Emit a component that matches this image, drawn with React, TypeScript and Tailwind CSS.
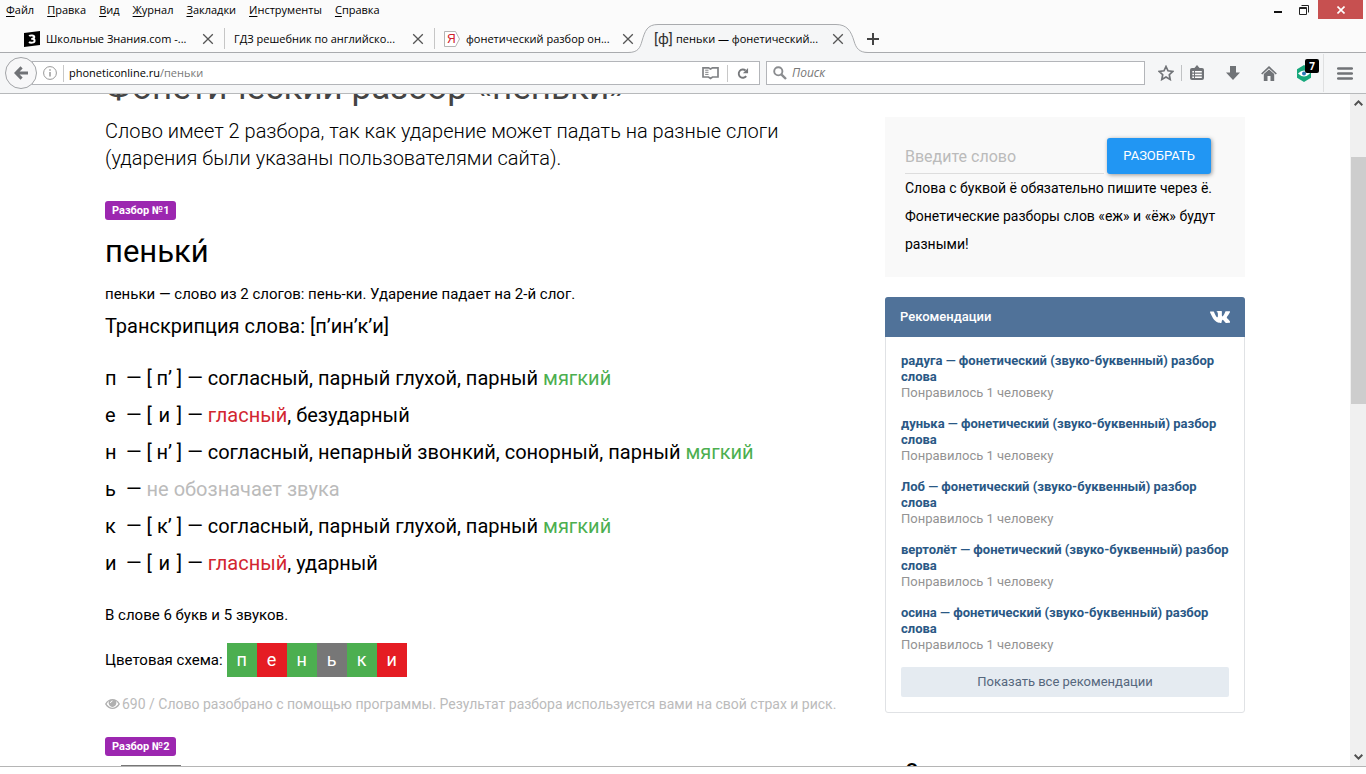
import React from "react";

const SANS = "font-['Open_Sans','Noto_Sans',sans-serif]";

const menus = ["Файл", "Правка", "Вид", "Журнал", "Закладки", "Инструменты", "Справка"];

function CloseMark() {
  return (
    <svg width="12" height="12" viewBox="0 0 12 12" stroke="#555" strokeWidth="1.3" aria-hidden="true">
      <path d="M1.2 1.2 10.8 10.8M10.8 1.2 1.2 10.8" />
    </svg>
  );
}

function ZnaniaIcon() {
  return (
    <svg width="16" height="16" viewBox="0 0 16 16" aria-hidden="true">
      <path d="M0 2 16 0V14L0 16Z" fill="#000" />
      <path d="M5.2 5.2C6 4.2 10.3 3.9 10.3 6 10.3 7.2 9.3 7.7 8 7.8 9.6 7.8 10.6 8.5 10.6 9.7 10.6 12.2 6.1 12 5 11M7.2 7.9H8.4" fill="none" stroke="#fff" strokeWidth="1.9" />
    </svg>
  );
}

function YandexIcon() {
  return (
    <span className="relative flex h-4 w-4 items-center">
      <svg className="absolute inset-0" width="16" height="16" viewBox="0 0 16 16" aria-hidden="true">
        <path d="M.5 .5H11.5L15.5 8 11.5 15.5H.5Z" fill="#fff" stroke="#b5b5b5" />
      </svg>
      <span className="relative pl-[3px] font-['Liberation_Sans',sans-serif] text-[12px] leading-4 text-[#d0202a]">Я</span>
    </span>
  );
}

function PhonIcon() {
  return <span className="w-4 font-['Roboto',sans-serif] text-[15px] leading-4 text-[#333]">[ф]</span>;
}

type TabProps = { title: string; icon?: React.ReactNode; active?: boolean; divider?: boolean };

function Tab({ title, icon, active, divider }: TabProps) {
  return (
    <div className="relative flex w-[210px] items-center">
      {active && (
        <svg className="absolute -left-[17px] top-0" width="240" height="29" viewBox="0 0 240 29" aria-hidden="true">
          <path
            d="M0 28.5C10 28.5 12 24 14 17C17 7 19 .5 30 .5H208C219 .5 223 7 226 17C228 24 231 28.5 240 28.5V29H0Z"
            fill="#f5f6f7"
          />
          <path
            d="M0 28.5C10 28.5 12 24 14 17C17 7 19 .5 30 .5H208C219 .5 223 7 226 17C228 24 231 28.5 240 28.5"
            fill="none"
            stroke="#a9abae"
          />
        </svg>
      )}
      <button className="relative flex min-w-0 flex-1 items-center gap-[6px] pl-[9px] text-left">
        {icon}
        <span className="text-[11px] leading-4 whitespace-nowrap text-black">{title}</span>
      </button>
      <button className="relative mr-[11px] ml-2" aria-label="Закрыть вкладку">
        <CloseMark />
      </button>
      {divider && <span className="absolute right-0 top-1 h-[21px] w-px bg-[#c6c6c6]" />}
    </div>
  );
}

function MenuBar() {
  return (
    <div className="flex h-6 items-start justify-between">
      <nav className="flex gap-[13px] pl-[6px]">
        {menus.map((m) => (
          <button key={m} className="text-[11px] leading-5 text-black">
            <span className="underline underline-offset-2">{m[0]}</span>
            {m.slice(1)}
          </button>
        ))}
      </nav>
      <div className="flex pr-[3px]">
        <button className="flex h-[19px] w-[26px] items-center justify-center" aria-label="Свернуть">
          <svg width="8" height="9" viewBox="0 0 8 9" aria-hidden="true"><path d="M0 6H8V8H0Z" fill="#111" /></svg>
        </button>
        <button className="flex h-[19px] w-[26px] items-center justify-center" aria-label="Восстановить">
          <svg width="10" height="10" viewBox="0 0 10 10" fill="none" stroke="#222" aria-hidden="true">
            <path d="M.5 2.5H7.5V9.5H.5ZM.5 3.5H7.5M2.5 .5H9.5V7.5" />
          </svg>
        </button>
        <button className="ml-px flex h-[19px] w-[45px] items-center justify-center bg-[#c75050]" aria-label="Закрыть">
          <svg width="8" height="8" viewBox="0 0 8 8" stroke="#fff" strokeWidth="1.6" aria-hidden="true"><path d="M.5 .5 7.5 7.5M7.5 .5 .5 7.5" /></svg>
        </button>
      </div>
    </div>
  );
}

function TabStrip() {
  return (
    <div className="relative flex h-[29px] pl-[15px]">
      <span className="absolute inset-x-0 bottom-0 h-px bg-[#a9abae]" />
      <Tab title="Школьные Знания.com -..." icon={<ZnaniaIcon />} divider />
      <Tab title="ГДЗ решебник по английско..." divider />
      <Tab title="фонетический разбор он..." icon={<YandexIcon />} />
      <Tab title="пеньки — фонетический..." icon={<PhonIcon />} active />
      <button className="ml-3 flex items-center" aria-label="Новая вкладка">
        <svg width="12" height="12" viewBox="0 0 12 12" aria-hidden="true"><path d="M5 0H7V5H12V7H7V12H5V7H0V5H5Z" fill="#444" /></svg>
      </button>
    </div>
  );
}

function Toolbar() {
  return (
    <div className="flex h-[41px] items-center border-b border-[#b7b9bb] bg-[#f5f6f7] pl-[5px]">
      <button className="relative z-10 flex size-8 shrink-0 items-center justify-center rounded-full border border-[#a2a4a7] bg-[#f7f7f8]" aria-label="Назад">
        <svg width="14" height="14" viewBox="0 0 14 14" aria-hidden="true">
          <path d="M7.6 1.4 2 7l5.6 5.6M2.6 7H14" fill="none" stroke="#707276" strokeWidth="3" />
        </svg>
      </button>
      <div className="-ml-[5px] flex h-6 flex-[1_1_728px] items-center border border-[#b3b5b9] bg-white">
        <svg className="ml-[10px]" width="14" height="14" viewBox="0 0 14 14" fill="none" stroke="#999" aria-hidden="true">
          <circle cx="7" cy="7" r="6.4" />
          <path d="M7 6V10.6M7 3.2V4.8" strokeWidth="1.5" />
        </svg>
        <span className="ml-[6px] h-[17px] w-px bg-[#c8c8c8]" />
        <div className="ml-[5px] flex flex-1 items-center text-[11px] leading-5">
          <input aria-label="Адрес" defaultValue="phoneticonline.ru" className="[field-sizing:content] bg-transparent text-black outline-none" />
          <span className="text-[#777]">/пеньки</span>
        </div>
        <button aria-label="Режим чтения">
          <svg width="17" height="14" viewBox="0 0 17 14" fill="none" stroke="#808285" strokeWidth="1.7" aria-hidden="true">
            <path d="M1 1.8H6.5L8.5 3 10.5 1.8H16V11H10.5L8.5 12.4 6.5 11H1Z" />
            <path d="M3.2 4.2H6.5M3.2 6.3H6.5M3.2 8.4H6.5" strokeWidth="1" />
          </svg>
        </button>
        <span className="ml-2 h-[17px] w-px bg-[#c8c8c8]" />
        <button className="mr-[10px] ml-[9px]" aria-label="Обновить">
          <svg width="12" height="13" viewBox="0 0 13 13" aria-hidden="true">
            <path d="M10 9.3A4.5 4.5 0 1 1 9.3 3.2" fill="none" stroke="#77797c" strokeWidth="2" />
            <path d="M12 .6V6.2H6.4Z" fill="#77797c" />
          </svg>
        </button>
      </div>
      <label className="ml-[6px] flex h-6 flex-[1_1_379px] items-center gap-[5px] border border-[#b3b5b9] bg-white pl-[6px]">
        <svg width="14" height="14" viewBox="0 0 14 14" fill="none" stroke="#8a8c8f" aria-hidden="true">
          <circle cx="5.3" cy="5.3" r="4.1" strokeWidth="1.9" />
          <path d="M8.3 8.3 13 13" strokeWidth="2.4" />
        </svg>
        <input placeholder="Поиск" aria-label="Поиск" className="min-w-0 flex-1 bg-transparent text-[12px] leading-5 italic outline-none placeholder:text-[#777]" />
      </label>
      <div className="flex shrink-0 items-center pl-[13px]">
        <button aria-label="Добавить закладку">
          <svg width="16" height="16" viewBox="0 0 16 16" aria-hidden="true">
            <path d="M8 1.5 10 5.8 14.8 6.4 11.3 9.7 12.2 14.5 8 12.1 3.8 14.5 4.7 9.7 1.2 6.4 6 5.8Z" fill="none" stroke="#707377" strokeWidth="1.7" />
          </svg>
        </button>
        <span className="ml-[7px] h-4 w-px bg-[#c0c2c4]" />
        <button className="ml-2" aria-label="Список закладок">
          <svg width="14" height="16" viewBox="0 0 14 16" aria-hidden="true">
            <rect y="3" width="14" height="12" rx="2" fill="#707377" />
            <path d="M4 3.5 7 0 10 3.5Z" fill="#707377" />
            <path d="M2.3 6H4V7.5H2.3ZM5 6H11.8V7.5H5ZM2.3 8.7H4V10.2H2.3ZM5 8.7H11.8V10.2H5ZM2.3 11.4H4V12.9H2.3ZM5 11.4H11.8V12.9H5Z" fill="#fff" />
          </svg>
        </button>
        <button className="ml-[22px]" aria-label="Загрузки">
          <svg width="14" height="14" viewBox="0 0 14 14" aria-hidden="true"><path d="M4 0H10V6.5H14L7 14 0 6.5H4Z" fill="#707377" /></svg>
        </button>
        <button className="ml-[21px]" aria-label="Домой">
          <svg width="16" height="15" viewBox="0 0 16 15" aria-hidden="true">
            <path d="M.7 8 8 1.2 15.3 8" fill="none" stroke="#707377" strokeWidth="1.7" />
            <path d="M2.8 8 8 3.4 13.2 8V15H9.5V10H6.5V15H2.8Z" fill="#707377" />
          </svg>
        </button>
        <button className="relative ml-[19px]" aria-label="Расширение">
          <svg width="16" height="17" viewBox="0 0 16 17" aria-hidden="true">
            <path d="M8 0 15 4.2V12.8L8 17 1 12.8V4.2Z" fill="#17a87c" />
            <path d="M2 8.5Q8 2.5 14 8.5 8 14.5 2 8.5Z" fill="#fff" />
            <circle cx="8" cy="8.5" r="2" fill="#2a78b8" />
          </svg>
          <span className="absolute -top-[6px] left-[9px] flex size-[14px] items-center justify-center rounded-[2px] bg-black text-[10px] leading-3 font-bold text-white">7</span>
        </button>
        <span className="ml-[11px] h-[38px] w-px bg-[#dfe0e1]" />
        <button className="mr-[13px] ml-[13px]" aria-label="Меню">
          <svg width="16" height="13" viewBox="0 0 16 13" aria-hidden="true"><path d="M1.2 1.5H14.8M1.2 6.5H14.8M1.2 11.5H14.8" stroke="#707377" strokeWidth="2.6" strokeLinecap="round" /></svg>
        </button>
      </div>
    </div>
  );
}

type Sound = { letter: string; sound?: string; text: string; kind?: "vowel"; soft?: boolean };

const sounds: Sound[] = [
  { letter: "п", sound: "п’", text: "согласный, парный глухой, парный ", soft: true },
  { letter: "е", sound: "и", text: ", безударный", kind: "vowel" },
  { letter: "н", sound: "н’", text: "согласный, непарный звонкий, сонорный, парный ", soft: true },
  { letter: "ь", text: "не обозначает звука" },
  { letter: "к", sound: "к’", text: "согласный, парный глухой, парный ", soft: true },
  { letter: "и", sound: "и", text: ", ударный", kind: "vowel" },
];

function SoundRow({ s }: { s: Sound }) {
  return (
    <li>
      <span className="inline-block w-4">{s.letter}</span>{" — "}
      {s.sound ? (
        <>
          [<span className="inline-block w-[25px] text-center">{s.sound}</span>]{" — "}
          {s.kind === "vowel" && <span className="text-[#d22630]">гласный</span>}
          {s.text}
          {s.soft && <span className="text-[#4caf50]">мягкий</span>}
        </>
      ) : (
        <span className="text-[#bbb]">{s.text}</span>
      )}
    </li>
  );
}

const scheme = [
  ["п", "bg-[#4caf50]"],
  ["е", "bg-[#e51c23]"],
  ["н", "bg-[#4caf50]"],
  ["ь", "bg-[#777777]"],
  ["к", "bg-[#4caf50]"],
  ["и", "bg-[#e51c23]"],
];

function Badge({ children }: { children: React.ReactNode }) {
  return <span className="block w-fit rounded-[3px] bg-[#9c27b0] px-[7px] text-[11px] leading-[19px] font-bold text-white">{children}</span>;
}

function Article() {
  return (
    <main className="w-2/3 px-[15px] text-black">
      <h1 className="-mt-[26px] text-[35px] leading-[40px] text-[#444]">Фонетический разбор «пеньки»</h1>
      <p className="mt-[10px] text-[20px] leading-[27px] font-light">
        Слово имеет 2 разбора, так как ударение может падать на разные слоги (ударения были указаны пользователями сайта).
      </p>
      <div className="mt-[29px]"><Badge>Разбор №1</Badge></div>
      <h2 className="mt-3 text-[31px] leading-[40px]">пеньки́</h2>
      <p className="mt-3 text-[15px] leading-[20px]">пеньки — слово из 2 слогов: пень-ки. Ударение падает на 2-й слог.</p>
      <p className="mt-2 text-[20px] leading-[28px]">Транскрипция слова: [п’ин’к’и]</p>
      <ul className="mt-5 text-[20px] leading-[37px]">
        {sounds.map((s, i) => (
          <SoundRow key={i} s={s} />
        ))}
      </ul>
      <p className="mt-[23px] text-[15px] leading-[20px]">В слове 6 букв и 5 звуков.</p>
      <div className="mt-[18px] flex items-center text-[15px]">
        <span>Цветовая схема:</span>
        <div className="ml-1 flex text-[18px] leading-[34px] text-white">
          {scheme.map(([l, c], i) => (
            <span key={i} className={`w-[30px] text-center ${c}`}>{l}</span>
          ))}
        </div>
      </div>
      <p className="mt-[17px] flex items-center gap-[2px] text-[14px] leading-[20px] whitespace-nowrap text-[#bbb]">
        <svg width="15" height="12" viewBox="0 0 15 12" aria-hidden="true">
          <path d="M0 6C3.6 -.8 11.4 -.8 15 6 11.4 12.8 3.6 12.8 0 6Z" fill="#b0b0b0" />
          <path d="M1.6 6C2.4 4.6 3.1 3.7 3.9 3.1 3 6 4.6 8.9 7.5 8.9S12 6 11.1 3.1C11.9 3.7 12.6 4.6 13.4 6 10 10.9 5 10.9 1.6 6Z" fill="#fff" />
          <path d="M5.4 5Q5.7 3.2 7.5 2.9" fill="none" stroke="#fff" strokeWidth="1" />
        </svg>
        690 / Слово разобрано с помощью программы. Результат разбора используется вами на свой страх и риск.
      </p>
      <div className="mt-[23px]"><Badge>Разбор №2</Badge></div>
      <div className="mt-[9px] ml-4 h-8 w-[60px] border border-[#777]" />
    </main>
  );
}

const recs = ["радуга", "дунька", "Лоб", "вертолёт", "осина"];

function Sidebar() {
  return (
    <aside className="w-1/3 px-[15px] pt-[23px]">
      <form className="bg-[#f9f9f9] px-5 pt-[21px] pb-[19px]" onSubmit={(e) => e.preventDefault()}>
        <div className="flex items-end pr-[14px]">
          <input aria-label="Введите слово" placeholder="Введите слово" className="h-9 min-w-0 flex-1 border-b border-[#ddd] bg-transparent pt-px text-[16px] outline-none placeholder:text-[#bbb]" />
          <button className="ml-[3px] h-9 rounded-[3px] bg-[#2196f3] px-4 text-[13px] text-white shadow-[1px_1px_4px_rgba(0,0,0,0.4)]">РАЗОБРАТЬ</button>
        </div>
        <p className="text-[14px] leading-[28px]">Слова с буквой ё обязательно пишите через ё. Фонетические разборы слов «еж» и «ёж» будут разными!</p>
      </form>
      <section className="mt-5 rounded-[3px] border border-[#e0e2e5] text-[13px] leading-4">
        <header className="-mx-px -mt-px flex h-10 items-center justify-between rounded-t-[3px] bg-[#507299] px-[15px] font-medium text-white">
          <h3>Рекомендации</h3>
          <svg width="20" height="12" viewBox="0 0 20 12" aria-hidden="true">
            <path
              d="M9.8 11.9H11S11.4 11.9 11.6 11.6C11.7 11.4 11.7 11 11.7 11S11.7 9.2 12.5 8.9C13.3 8.6 14.4 10.7 15.5 11.4 16.4 12 17 11.9 17 11.9L19.8 11.8S21.3 11.7 20.6 10.5C20.5 10.4 20.1 9.6 18.4 8 16.6 6.3 16.8 6.6 19 3.7 20.3 2 20.8.9 20.7.5 20.5.1 19.5.2 19.5.2L16.4.2S16.1.2 15.9.3C15.8.4 15.6.7 15.6.7S15.1 2 14.5 3.1C13.1 5.4 12.5 5.5 12.3 5.4 11.8 5 11.9 4 11.9 3.3 11.9 1 12.2.1 11.2 0 10.8 0 10.6 0 9.6 0 8.4 0 7.4 0 6.8.2 6.4.4 6.1.9 6.3.9 6.5.9 7 1 7.3 1.4 7.6 1.9 7.6 3 7.6 3S7.8 6 7.2 6.3C6.7 6.6 6.1 6 4.8 3.7 4.1 2.5 3.6 1.2 3.6 1.2S3.5.9 3.3.8C3 .6 2.7.6 2.7.6L-.2.6S-.7.6-.8.8 -.8 1.2-.8 1.2 1.5 6.6 4.1 9.3C6.5 11.8 9.8 11.9 9.8 11.9Z"
              fill="#fff"
              transform="translate(.8 0) scale(.93 1)"
            />
          </svg>
        </header>
        <div className="px-[15px] pt-4 pb-[15px]">
          <ul className="flex flex-col gap-[15px]">
            {recs.map((r) => (
              <li key={r}>
                <a href="#" className="block font-bold text-[#2a5885]">{r} — фонетический (звуко-буквенный) разбор слова</a>
                <p className="text-[#939393]">Понравилось 1 человеку</p>
              </li>
            ))}
          </ul>
          <button className="mt-[14px] block h-[30px] w-full rounded-[2px] bg-[#e5ebf1] text-[#55677d]">Показать все рекомендации</button>
        </div>
      </section>
      <h3 className="mt-[46px] pl-5 text-[20px] leading-[24px] font-medium">О</h3>
    </aside>
  );
}

function ScrollBar() {
  return (
    <div className="flex w-4 shrink-0 flex-col items-center bg-[#f0f0f0]" aria-hidden="true">
      <svg className="my-[6px] shrink-0" width="9" height="6" viewBox="0 0 9 6"><path d="M.7 5.2 4.5 1.4 8.3 5.2" fill="none" stroke="#505050" strokeWidth="2" /></svg>
      <div className="flex w-full flex-1 flex-col">
        <span className="flex-[45]" />
        <span className="mx-auto w-[15px] flex-[247] bg-[#cdcdcd]" />
        <span className="flex-[345]" />
      </div>
      <svg className="my-[6px] shrink-0" width="9" height="6" viewBox="0 0 9 6"><path d="M.7 .8 4.5 4.6 8.3 .8" fill="none" stroke="#505050" strokeWidth="2" /></svg>
    </div>
  );
}

export default function App() {
  return (
    <div className={`flex h-screen flex-col bg-white pb-[7px] ${SANS}`}>
      <div className="shrink-0 bg-[#fbfbfb]">
        <MenuBar />
        <TabStrip />
        <Toolbar />
      </div>
      <div className="flex min-h-0 flex-1 border-b border-[#b5b5b5] font-['Roboto',sans-serif]">
        <div className="min-w-0 flex-1 overflow-hidden">
          <div className="mx-auto flex max-w-[1170px]">
            <Article />
            <Sidebar />
          </div>
        </div>
        <ScrollBar />
      </div>
    </div>
  );
}
